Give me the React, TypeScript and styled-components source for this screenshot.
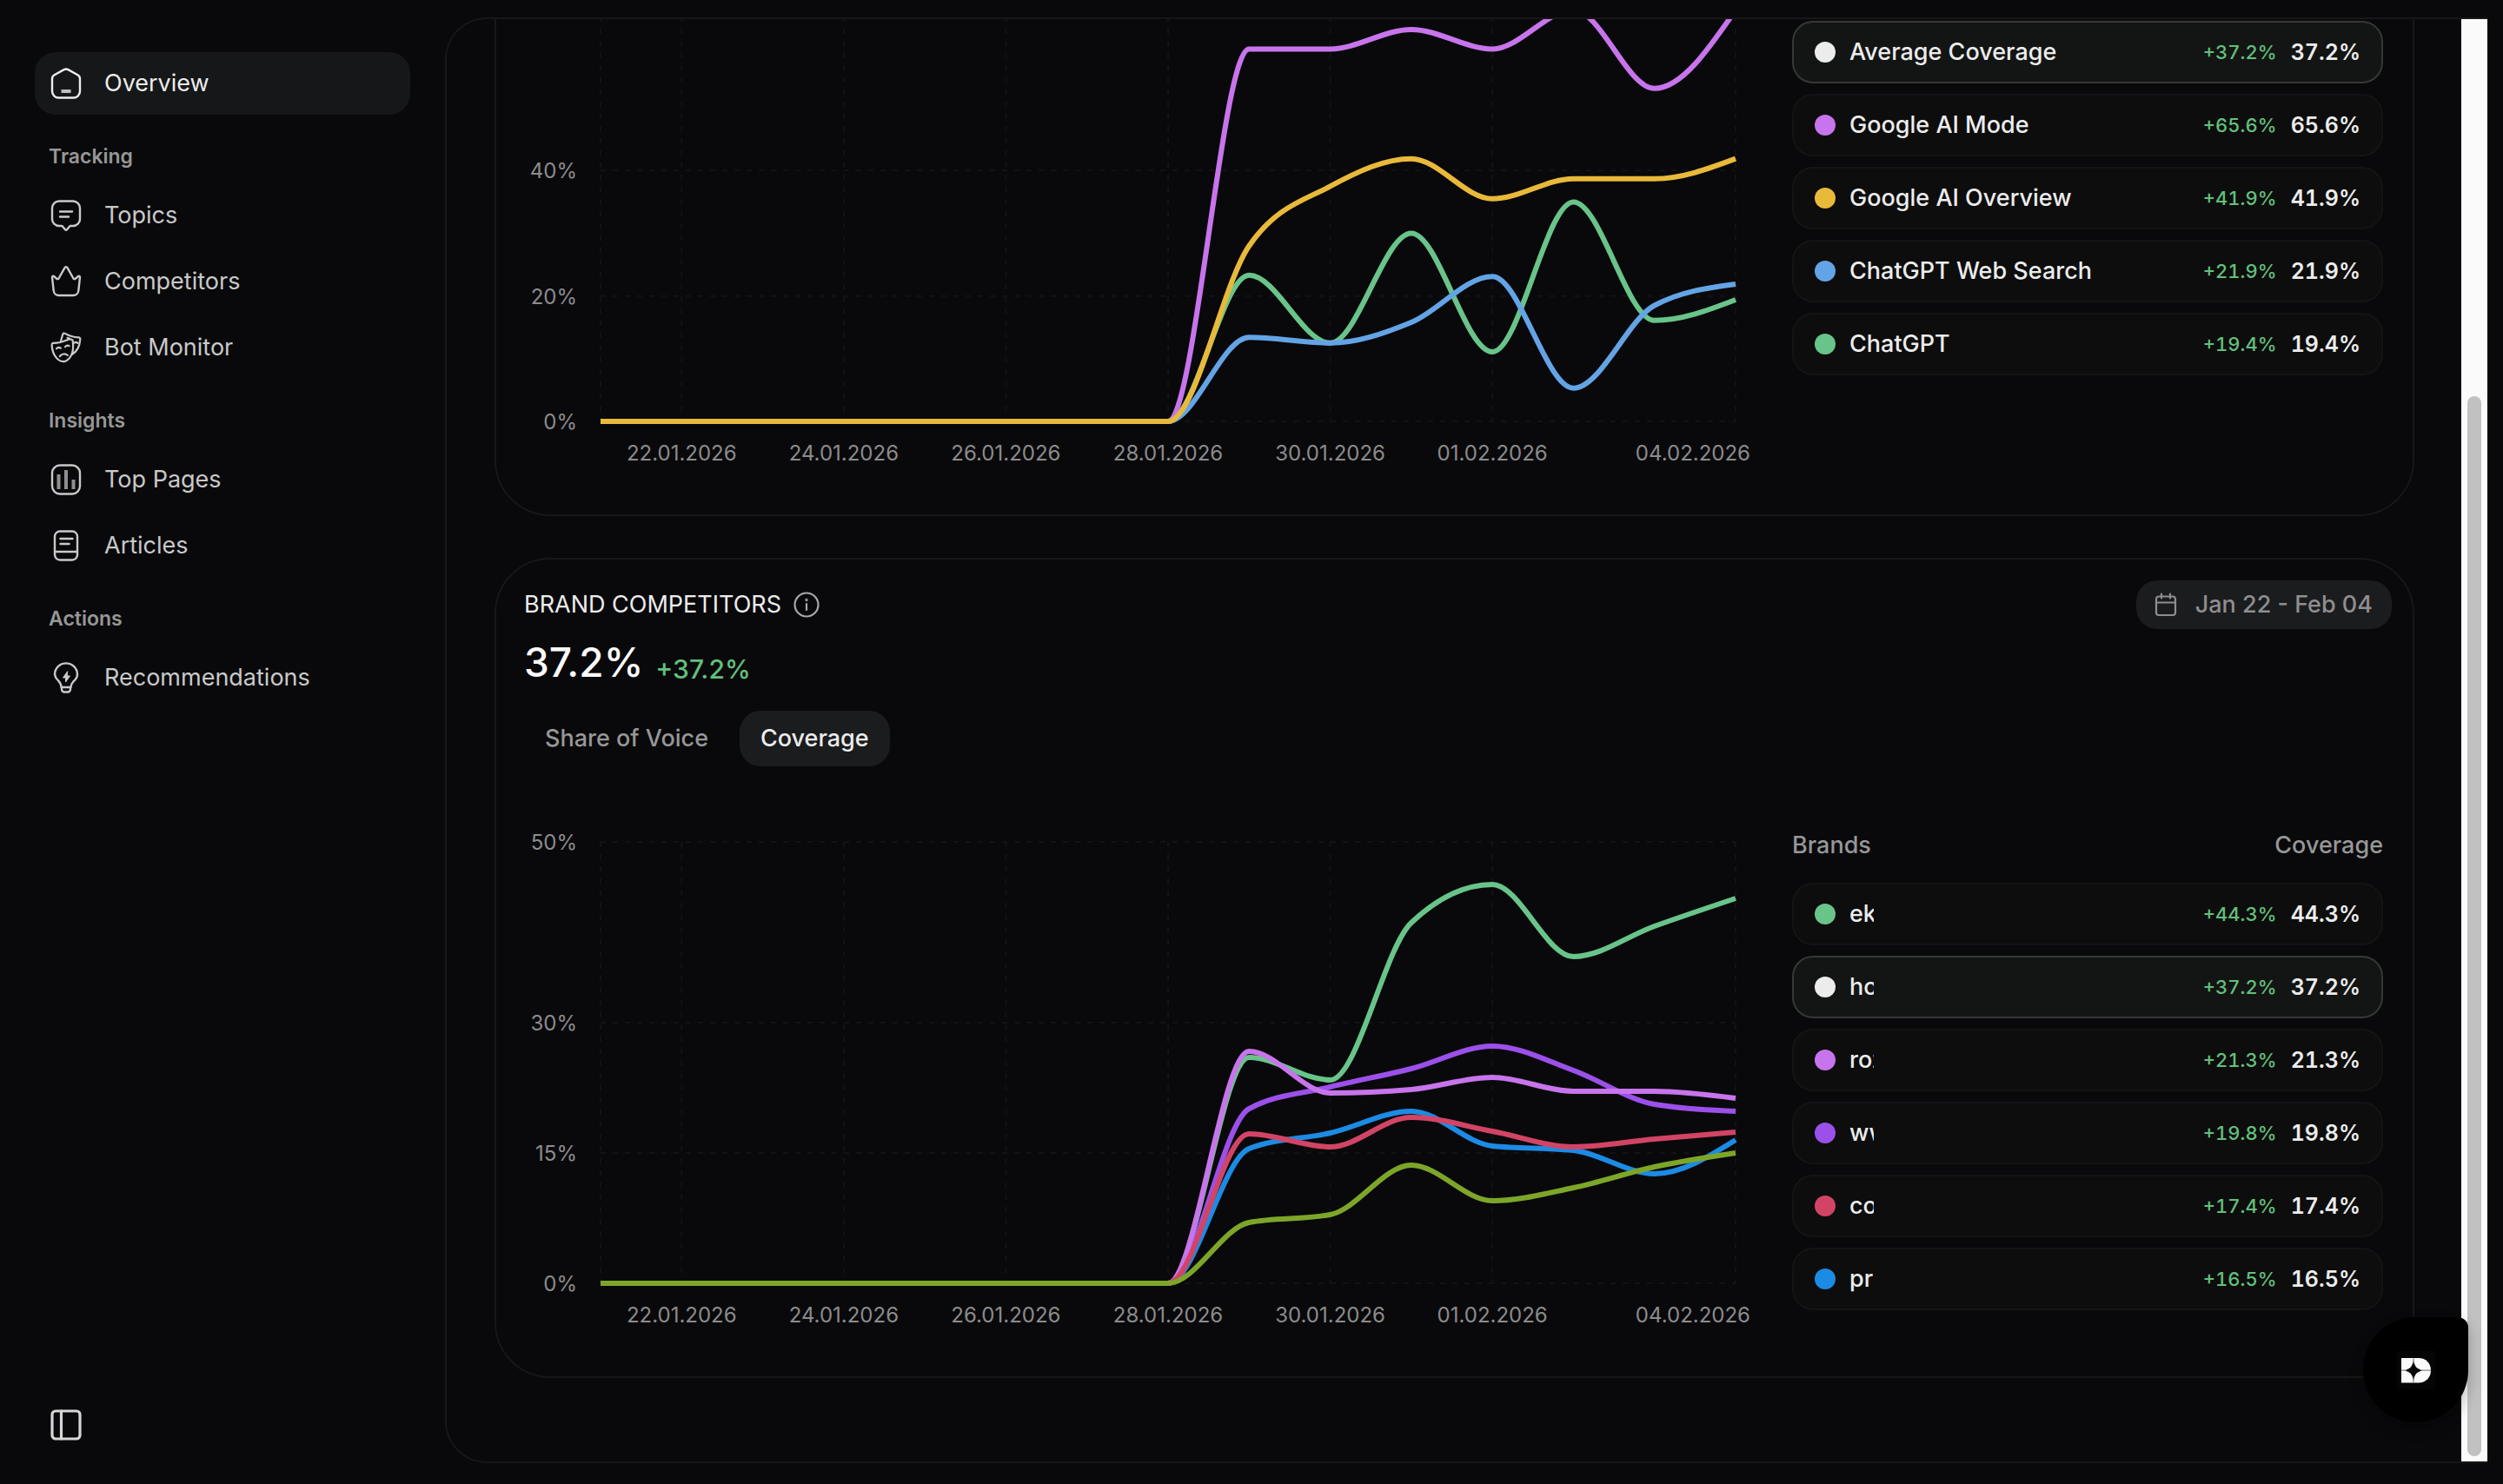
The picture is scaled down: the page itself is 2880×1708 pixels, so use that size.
import React, { useEffect, useLayoutEffect, useRef, useState } from "react";
import styled, { createGlobalStyle } from "styled-components";

const FONT = `Inter, "Liberation Sans", sans-serif`;

const color = {
  page: "#09090b",
  line: "#171718",
  text: "#ececec",
  nav: "#c9c9c9",
  muted: "#979797",
  positive: "#62c07c",
  raised: "#1b1c1e",
};

const GlobalStyle = createGlobalStyle`
  *, *::before, *::after { box-sizing: border-box; }
  html, body { margin: 0; background: ${color.page}; }
  body, button { font-family: ${FONT}; }
  #root { height: 100vh; }
`;

const Shell = styled.div`
  display: grid;
  grid-template-columns: 512px minmax(0, 1fr);
  grid-template-rows: minmax(0, 1fr);
  height: 100vh;
  overflow: hidden;
  color: ${color.text};
  background: ${color.page};
`;

const Sidebar = styled.aside`
  display: flex;
  flex-direction: column;
  justify-content: space-between;
  padding: 60px 40px 50px;
`;

const Nav = styled.nav`
  display: flex;
  flex-direction: column;
`;

const NavHeading = styled.h2`
  height: 80px;
  margin: 0;
  padding: 32px 16px 0;
  font-size: 23px;
  line-height: 32px;
  font-weight: 600;
  color: ${color.muted};
`;

const NavList = styled.ul`
  display: flex;
  flex-direction: column;
  gap: 4px;
  margin: 0;
  padding: 0;
  list-style: none;
`;

const NavLink = styled.a<{ $active?: boolean }>`
  display: flex;
  align-items: center;
  gap: 26px;
  height: 72px;
  padding: 0 18px;
  border-radius: 24px;
  font-size: 27px;
  line-height: 36px;
  text-decoration: none;
  color: ${(p) => (p.$active ? color.text : color.nav)};
  background: ${(p) => (p.$active ? "#161718" : "transparent")};
`;

const LineIcon = styled.svg<{ $size: number }>`
  flex: none;
  display: block;
  width: ${(p) => p.$size}px;
  height: ${(p) => p.$size}px;
  fill: none;
  stroke: currentColor;
  stroke-linecap: round;
  stroke-linejoin: round;
`;

const CollapseButton = styled.button`
  display: flex;
  align-self: flex-start;
  padding: 0 18px;
  border: 0;
  background: none;
  color: #d6d6d6;
  cursor: pointer;
`;

const Frame = styled.div`
  display: flex;
  min-width: 0;
  padding: 20px 18px 24px 0;
`;

const Panel = styled.main`
  display: grid;
  grid-template-columns: minmax(0, 1fr) 30px;
  grid-template-rows: minmax(0, 1fr);
  flex: 1;
  min-width: 0;
  overflow: hidden;
  border: 2px solid ${color.line};
  border-right: 0;
  border-radius: 48px 0 0 48px;
`;

const Viewport = styled.div`
  display: flex;
  flex-direction: column;
  justify-content: flex-end;
  gap: 48px;
  min-width: 0;
  padding: 0 54px 96px 55px;
  overflow: hidden;
`;

const ScrollTrack = styled.div`
  display: flex;
  flex-direction: column;
  justify-content: flex-end;
  align-items: center;
  padding: 6px 0;
  background: #fafafa;
`;

const ScrollThumb = styled.div`
  width: 16px;
  height: 74%;
  border-radius: 8px;
  background: #c1c1c1;
`;

const Card = styled.section`
  display: flex;
  flex: none;
  flex-direction: column;
  border: 2px solid ${color.line};
  border-radius: 64px;
`;

const CardHeader = styled.header`
  display: flex;
  align-items: center;
  justify-content: space-between;
  padding: 24px 24px 0 32px;
`;

const TitleGroup = styled.div`
  display: flex;
  align-items: center;
  gap: 14px;
  color: #a9a9a9;
`;

const Title = styled.h2`
  margin: 0;
  font-size: 27px;
  line-height: 36px;
  font-weight: 400;
  color: ${color.text};
`;

const IconButton = styled.button`
  display: flex;
  padding: 0;
  border: 0;
  background: none;
  color: inherit;
  cursor: pointer;
`;

const DateButton = styled.button`
  display: flex;
  align-items: center;
  gap: 20px;
  height: 56px;
  padding: 0 22px 0 20px;
  border: 0;
  border-radius: 24px;
  background: ${color.raised};
  font-size: 27px;
  line-height: 36px;
  font-weight: 500;
  color: #8e8e8e;
  cursor: pointer;
`;

const Headline = styled.div`
  display: flex;
  align-items: flex-end;
  gap: 14px;
  height: 68px;
  padding: 8px 32px 0;
`;

const HeadlineValue = styled.strong`
  font-size: 46px;
  line-height: 60px;
  font-weight: 500;
  color: #fafafa;
`;

const HeadlineDelta = styled.span`
  font-size: 30px;
  line-height: 44px;
  font-weight: 500;
  color: ${color.positive};
`;

const Tabs = styled.div`
  display: flex;
  gap: 12px;
  padding: 26px 32px 0;
`;

const Tab = styled.button<{ $active?: boolean }>`
  height: 64px;
  padding: 0 24px;
  border: 0;
  border-radius: 24px;
  font-size: 27px;
  line-height: 36px;
  font-weight: 500;
  color: ${(p) => (p.$active ? color.text : color.muted)};
  background: ${(p) => (p.$active ? color.raised : "transparent")};
  cursor: pointer;
`;

const CardBody = styled.div<{ $top: number }>`
  display: grid;
  grid-template-columns: minmax(0, 1fr) 680px;
  gap: 48px;
  padding: ${(p) => p.$top}px 34px 56px 32px;
`;

const ChartBox = styled.div`
  min-width: 0;
  padding-top: 14px;
`;

const ChartSvg = styled.svg`
  display: block;
  overflow: visible;
  font-family: ${FONT};
  font-size: 24px;
  fill: #8c8c8c;
`;

const LegendColumn = styled.div`
  display: flex;
  flex-direction: column;
`;

const LegendHead = styled.div`
  display: flex;
  justify-content: space-between;
  min-height: 61px;
  font-size: 27px;
  line-height: 36px;
  font-weight: 500;
  color: ${color.muted};
`;

const LegendList = styled.ul`
  display: flex;
  flex-direction: column;
  gap: 12px;
  margin: 0;
  padding: 0;
  list-style: none;
`;

const LegendRow = styled.li<{ $active?: boolean }>`
  display: flex;
  align-items: center;
  gap: 16px;
  height: 72px;
  padding: 0 24px;
  border: 2px solid ${(p) => (p.$active ? "#363737" : "#141414")};
  border-radius: 24px;
  font-size: 27px;
  line-height: 36px;
  font-weight: 500;
  background: ${(p) => (p.$active ? "#131514" : "#0d0d0d")};
`;

const Dot = styled.span<{ $color: string }>`
  flex: none;
  width: 24px;
  height: 24px;
  border-radius: 50%;
  background: ${(p) => p.$color};
`;

const LegendName = styled.span<{ $clip?: boolean }>`
  overflow: hidden;
  white-space: nowrap;
  width: ${(p) => (p.$clip ? "28px" : "auto")};
`;

const LegendDelta = styled.span`
  margin-left: auto;
  font-size: 22px;
  font-variant-numeric: tabular-nums;
  color: ${color.positive};
`;

const LegendValue = styled.span`
  font-size: 25px;
  font-weight: 600;
  font-variant-numeric: tabular-nums;
`;

const Launcher = styled.button`
  position: fixed;
  right: 40px;
  bottom: 71px;
  display: flex;
  align-items: center;
  justify-content: center;
  width: 121px;
  height: 121px;
  padding: 0;
  border: 0;
  border-radius: 60px 12px 60px 60px;
  background: #000;
  box-shadow: 0 8px 16px rgba(0, 0, 0, 0.25);
  cursor: pointer;
`;

/* ---------- icons ---------- */

function Icon({ size = 36, width = 2, children }: { size?: number; width?: number; children: React.ReactNode }) {
  return (
    <LineIcon $size={size} viewBox={`0 0 ${size} ${size}`} strokeWidth={width} aria-hidden="true">
      {children}
    </LineIcon>
  );
}

const icons: Record<string, React.ReactNode> = {
  home: (
    <Icon width={2.4}>
      <path d="M15.6 2.1a5 5 0 0 1 4.8 0l11 6.2a5 5 0 0 1 2.6 4.4V27a7.500 7.500 0 0 1-7.500 7.500h-17A7.500 7.500 0 0 1 2 27V12.700a5 5 0 0 1 2.600-4.400z" />
      <path d="M12.500 27h11" strokeWidth={4} strokeLinecap="butt" stroke="#bdbdbd" />
    </Icon>
  ),
  topics: (
    <Icon width={2.4}>
      <path d="M10 1.500h16a8 8 0 0 1 8 8V22a8 8 0 0 1-8 8h-2.500a2 2 0 0 0-1.600.8l-2.900 3.500a1.300 1.300 0 0 1-2 0l-2.900-3.500a2 2 0 0 0-1.600-.8H10a8 8 0 0 1-8-8V9.500a8 8 0 0 1 8-8z" />
      <path d="M11 13.500h14M11 19.500h10" />
    </Icon>
  ),
  crown: (
    <Icon width={2.4}>
      <path d="M16.500 2.200a1.700 1.700 0 0 1 3 0l7 12.300a1.500 1.500 0 0 0 2.200.4l3.200-2.900a1.300 1.300 0 0 1 2.100 1.100l-1.700 15.400a6 6 0 0 1-6 5.500H9.700a6 6 0 0 1-6-5.500L2 13.100a1.300 1.300 0 0 1 2.100-1.100l3.200 2.900a1.500 1.500 0 0 0 2.200-.4z" />
    </Icon>
  ),
  masks: (
    <Icon width={2.2}>
      <path d="M2.800 12.800c6.600.2 11-1.200 16.600-3.600 2.200-.9 4.200-1.100 6.200.2.9 6.200 1.300 13.200-2.200 18.600-2.100 3.600-5 6-8.400 6.200C9 34.200 2.400 27 1.600 15.600c0-1.600.2-2.400 1.200-2.800z" />
      <path d="M12 10.800l2.200-8c.4-1.200 1.600-1.600 2.800-.9 5 2.900 9.800 4.200 15.400 4.400 1.300.1 2.100.9 1.900 2.300-.6 8-3.800 14-9.500 17.400M19.500 6.800l2.800 1M27.500 12.500c1.500-.8 2.800-.6 3.800.4" />
      <path d="M7 19.200c1.200-1.400 3.200-1.700 4.800-.6M17 17.200c.9-1.500 2.900-2 4.500-1.100M10.800 28c2-2.800 6-3.400 9-1.200" />
    </Icon>
  ),
  chart: (
    <Icon width={2.4}>
      <rect x="2" y="1.500" width="32" height="33" rx="9" />
      <path d="M9.500 12v17M18 7v22M26.500 18v11" strokeWidth={4} strokeLinecap="butt" stroke="#8f8f8f" />
    </Icon>
  ),
  article: (
    <Icon width={2.4}>
      <rect x="5" y="1.500" width="26" height="33" rx="6" />
      <path d="M5 25h26M11.500 10h14M11.500 16h10" />
    </Icon>
  ),
  bulb: (
    <Icon width={2.4}>
      <path d="M12.500 29c0-3.500-1-5-3.200-7.400A13 13 0 0 1 5 14.400a13 13 0 0 1 26 0c0 3-1.700 5.100-4.300 7.700-2.200 2.400-3.200 3.400-3.200 6.900z" />
      <path d="M13 29v2.500a3 3 0 0 0 3 3h4a3 3 0 0 0 3-3V29" />
      <path d="M19.500 11l-5 7h3v5l5-7h-3z" fill="currentColor" strokeWidth={1} />
    </Icon>
  ),
  sidebar: (
    <Icon width={3.2}>
      <rect x="2" y="2" width="32" height="32" rx="4" />
      <path d="M12.500 2v32" />
    </Icon>
  ),
  info: (
    <Icon size={30} width={2.2}>
      <circle cx="15" cy="15" r="13.500" />
      <path d="M15 14v7" />
      <circle cx="15" cy="9.500" r="0.600" />
    </Icon>
  ),
  calendar: (
    <Icon size={28} width={2.2}>
      <rect x="3" y="4.500" width="22" height="21.500" rx="3" />
      <path d="M3 11.500h22M9 1.500v5M19 1.500v5" />
    </Icon>
  ),
};

/* ---------- chart ---------- */

type Series = { color: string; values: number[] };
type Tick = { at: number; label: string };

const DAYS = 14;
const FLAT_DAYS = 8;
const DATE_TICKS = [
  { day: 1, label: "22.01.2026" },
  { day: 3, label: "24.01.2026" },
  { day: 5, label: "26.01.2026" },
  { day: 7, label: "28.01.2026" },
  { day: 9, label: "30.01.2026" },
  { day: 11, label: "01.02.2026" },
  { day: 14, label: "04.02.2026" },
];

const CHART_HEIGHT = 559;
const PLOT_LEFT = 88;
const PLOT_RIGHT = 17;
const AXIS_HEIGHT = 51;

/* Monotone cubic interpolation, so that the curve never overshoots a data point. */
function monotonePath(points: [number, number][]) {
  const n = points.length;
  const slope = (i: number) => (points[i + 1][1] - points[i][1]) / (points[i + 1][0] - points[i][0]);
  const tangents = points.map((_, i) => {
    if (i === 0 || i === n - 1) return 0;
    const a = slope(i - 1);
    const b = slope(i);
    if (a * b <= 0) return 0;
    return Math.sign(a) * Math.min(Math.abs(a), Math.abs(b), Math.abs(a + b) / 4) * 2;
  });
  tangents[n - 1] = (3 * slope(n - 2) - tangents[n - 2]) / 2;
  let d = `M${points[0][0]},${points[0][1]}`;
  for (let i = 0; i < n - 1; i++) {
    const [x0, y0] = points[i];
    const [x1, y1] = points[i + 1];
    const h = (x1 - x0) / 3;
    d += `C${x0 + h},${y0 + h * tangents[i]} ${x1 - h},${y1 - h * tangents[i + 1]} ${x1},${y1}`;
  }
  return d;
}

function LineChart({ label, max, ticks, series }: { label: string; max: number; ticks: Tick[]; series: Series[] }) {
  const box = useRef<HTMLDivElement>(null);
  const [width, setWidth] = useState(1427);

  const measure = () => {
    if (box.current) setWidth(box.current.clientWidth);
  };
  useLayoutEffect(measure, []);
  useEffect(() => {
    window.addEventListener("resize", measure);
    return () => window.removeEventListener("resize", measure);
  }, []);

  const right = width - PLOT_RIGHT;
  const plotHeight = CHART_HEIGHT - AXIS_HEIGHT;
  const x = (day: number) => PLOT_LEFT + ((right - PLOT_LEFT) * day) / DAYS;
  const y = (value: number) => plotHeight * (1 - value / max);

  return (
    <ChartBox ref={box}>
      <ChartSvg width={width} height={CHART_HEIGHT} role="img" aria-label={label}>
        <g stroke="#131315" strokeWidth={2} strokeDasharray="6 8">
          {ticks.map((t) => (
            <line key={t.label} x1={PLOT_LEFT} x2={right} y1={y(t.at)} y2={y(t.at)} />
          ))}
          <line x1={PLOT_LEFT} x2={PLOT_LEFT} y1={0} y2={plotHeight} />
          {DATE_TICKS.map((t) => (
            <line key={t.label} x1={x(t.day)} x2={x(t.day)} y1={0} y2={plotHeight} />
          ))}
        </g>
        {ticks.map((t) => (
          <text key={t.label} x={PLOT_LEFT - 27} y={y(t.at) + 9} textAnchor="end">
            {t.label}
          </text>
        ))}
        {DATE_TICKS.map((t) => (
          <text
            key={t.label}
            x={t.day === DAYS ? width : x(t.day)}
            y={plotHeight + 45}
            textAnchor={t.day === DAYS ? "end" : "middle"}
          >
            {t.label}
          </text>
        ))}
        {series.map((s) => (
          <path
            key={s.color}
            d={monotonePath([...Array(FLAT_DAYS).fill(0), ...s.values].map((v, i) => [x(i), y(v)] as [number, number]))}
            fill="none"
            stroke={s.color}
            strokeWidth={6}
          />
        ))}
      </ChartSvg>
    </ChartBox>
  );
}

/* ---------- data ---------- */

const c = {
  white: "#ececec",
  pink: "#c874ec",
  yellow: "#e9b93a",
  sky: "#63a4e6",
  green: "#69c48a",
  purple: "#9b50ea",
  red: "#d24465",
  blue: "#1c8be4",
  olive: "#7da629",
};

const engineSeries: Series[] = [
  { color: c.pink, values: [59.4, 59.4, 62.5, 59.4, 65.6, 53.1, 65.6] },
  { color: c.green, values: [23.3, 12.5, 30, 11.1, 35, 16.1, 19.4] },
  { color: c.sky, values: [13.4, 12.5, 15.8, 23.1, 5.3, 18.5, 21.9] },
  { color: c.yellow, values: [28, 37.5, 41.9, 35.5, 38.7, 38.7, 41.9] },
];

const brandSeries: Series[] = [
  { color: c.green, values: [26, 23.4, 41.5, 45.9, 37.6, 41.1, 44.3] },
  { color: c.purple, values: [20.1, 22.6, 24.7, 27.3, 24.5, 20.6, 19.8] },
  { color: c.pink, values: [26.7, 21.9, 22.3, 23.7, 22.1, 22.1, 21.3] },
  { color: c.blue, values: [15.5, 17.3, 19.8, 15.8, 15.3, 12.6, 16.5] },
  { color: c.red, values: [17.2, 15.7, 19.1, 17.5, 15.7, 16.6, 17.4] },
  { color: c.olive, values: [7, 7.9, 13.6, 9.5, 11, 13.4, 15] },
];

type Entry = { name: string; color: string; value: string; active?: boolean };

const engines: Entry[] = [
  { name: "Average Coverage", color: c.white, value: "37.2%", active: true },
  { name: "Google AI Mode", color: c.pink, value: "65.6%" },
  { name: "Google AI Overview", color: c.yellow, value: "41.9%" },
  { name: "ChatGPT Web Search", color: c.sky, value: "21.9%" },
  { name: "ChatGPT", color: c.green, value: "19.4%" },
];

const brands: Entry[] = [
  { name: "ek", color: c.green, value: "44.3%" },
  { name: "ho", color: c.white, value: "37.2%", active: true },
  { name: "roz", color: c.pink, value: "21.3%" },
  { name: "ww", color: c.purple, value: "19.8%" },
  { name: "co", color: c.red, value: "17.4%" },
  { name: "pr", color: c.blue, value: "16.5%" },
];

const navGroups = [
  { heading: "", items: [{ label: "Overview", icon: "home", active: true }] },
  {
    heading: "Tracking",
    items: [
      { label: "Topics", icon: "topics" },
      { label: "Competitors", icon: "crown" },
      { label: "Bot Monitor", icon: "masks" },
    ],
  },
  {
    heading: "Insights",
    items: [
      { label: "Top Pages", icon: "chart" },
      { label: "Articles", icon: "article" },
    ],
  },
  { heading: "Actions", items: [{ label: "Recommendations", icon: "bulb" }] },
] as { heading: string; items: { label: string; icon: string; active?: boolean }[] }[];

function Legend({ entries, clip }: { entries: Entry[]; clip?: boolean }) {
  return (
    <LegendList>
      {entries.map((e) => (
        <LegendRow key={e.name} $active={e.active}>
          <Dot $color={e.color} />
          <LegendName $clip={clip}>{e.name}</LegendName>
          <LegendDelta>+{e.value}</LegendDelta>
          <LegendValue>{e.value}</LegendValue>
        </LegendRow>
      ))}
    </LegendList>
  );
}

export default function App() {
  return (
    <>
      <GlobalStyle />
      <Shell>
        <Sidebar>
          <Nav aria-label="Main">
            {navGroups.map((g) => (
              <React.Fragment key={g.heading}>
                {g.heading && <NavHeading>{g.heading}</NavHeading>}
                <NavList>
                  {g.items.map((item) => (
                    <li key={item.label}>
                      <NavLink href="#" $active={item.active}>
                        {icons[item.icon]}
                        {item.label}
                      </NavLink>
                    </li>
                  ))}
                </NavList>
              </React.Fragment>
            ))}
          </Nav>
          <CollapseButton type="button" aria-label="Collapse sidebar">
            {icons.sidebar}
          </CollapseButton>
        </Sidebar>

        <Frame>
          <Panel>
            <Viewport>
              <Card>
                <CardBody $top={32}>
                  <LineChart
                    label="Coverage by engine"
                    max={70.4}
                    ticks={[
                      { at: 0, label: "0%" },
                      { at: 20, label: "20%" },
                      { at: 40, label: "40%" },
                    ]}
                    series={engineSeries}
                  />
                  <LegendColumn>
                    <LegendHead />
                    <Legend entries={engines} />
                  </LegendColumn>
                </CardBody>
              </Card>

              <Card>
                <CardHeader>
                  <TitleGroup>
                    <Title>BRAND COMPETITORS</Title>
                    <IconButton type="button" aria-label="About brand competitors">
                      {icons.info}
                    </IconButton>
                  </TitleGroup>
                  <DateButton type="button">
                    {icons.calendar}
                    Jan 22 - Feb 04
                  </DateButton>
                </CardHeader>
                <Headline>
                  <HeadlineValue>37.2%</HeadlineValue>
                  <HeadlineDelta>+37.2%</HeadlineDelta>
                </Headline>
                <Tabs role="tablist">
                  <Tab type="button" role="tab" aria-selected={false}>
                    Share of Voice
                  </Tab>
                  <Tab type="button" role="tab" aria-selected $active>
                    Coverage
                  </Tab>
                </Tabs>
                <CardBody $top={73}>
                  <LineChart
                    label="Coverage by brand"
                    max={50.8}
                    ticks={[
                      { at: 0, label: "0%" },
                      { at: 15, label: "15%" },
                      { at: 30, label: "30%" },
                      { at: 50.8, label: "50%" },
                    ]}
                    series={brandSeries}
                  />
                  <LegendColumn>
                    <LegendHead>
                      <span>Brands</span>
                      <span>Coverage</span>
                    </LegendHead>
                    <Legend entries={brands} clip />
                  </LegendColumn>
                </CardBody>
              </Card>
            </Viewport>
            <ScrollTrack aria-hidden="true">
              <ScrollThumb />
            </ScrollTrack>
          </Panel>
        </Frame>

        <Launcher type="button" aria-label="Open assistant">
          <svg width="44" height="44" viewBox="0 0 44 44" aria-hidden="true">
            <rect width="44" height="44" fill="#050506" />
            <path fill="#fafafa" d="M5 8H25C33 8 39 14 39 22.200S33 36.400 25 36.400H5z" />
            <path d="M19 8v28.400M5 22.200h34" stroke="#8a8a8a" strokeWidth="1.200" />
            <path fill="#08080a" d="M19 10Q19.600 21.600 30 22.200Q19.600 22.800 19 34.400Q18.400 22.800 8 22.200Q18.400 21.600 19 10z" />
            <path fill="#08080a" d="M19 14.500Q20.500 20.700 26.500 22.200Q20.500 23.700 19 30Q17.500 23.700 11.500 22.200Q17.500 20.700 19 14.500z" stroke="#08080a" strokeWidth="2" />
          </svg>
        </Launcher>
      </Shell>
    </>
  );
}
